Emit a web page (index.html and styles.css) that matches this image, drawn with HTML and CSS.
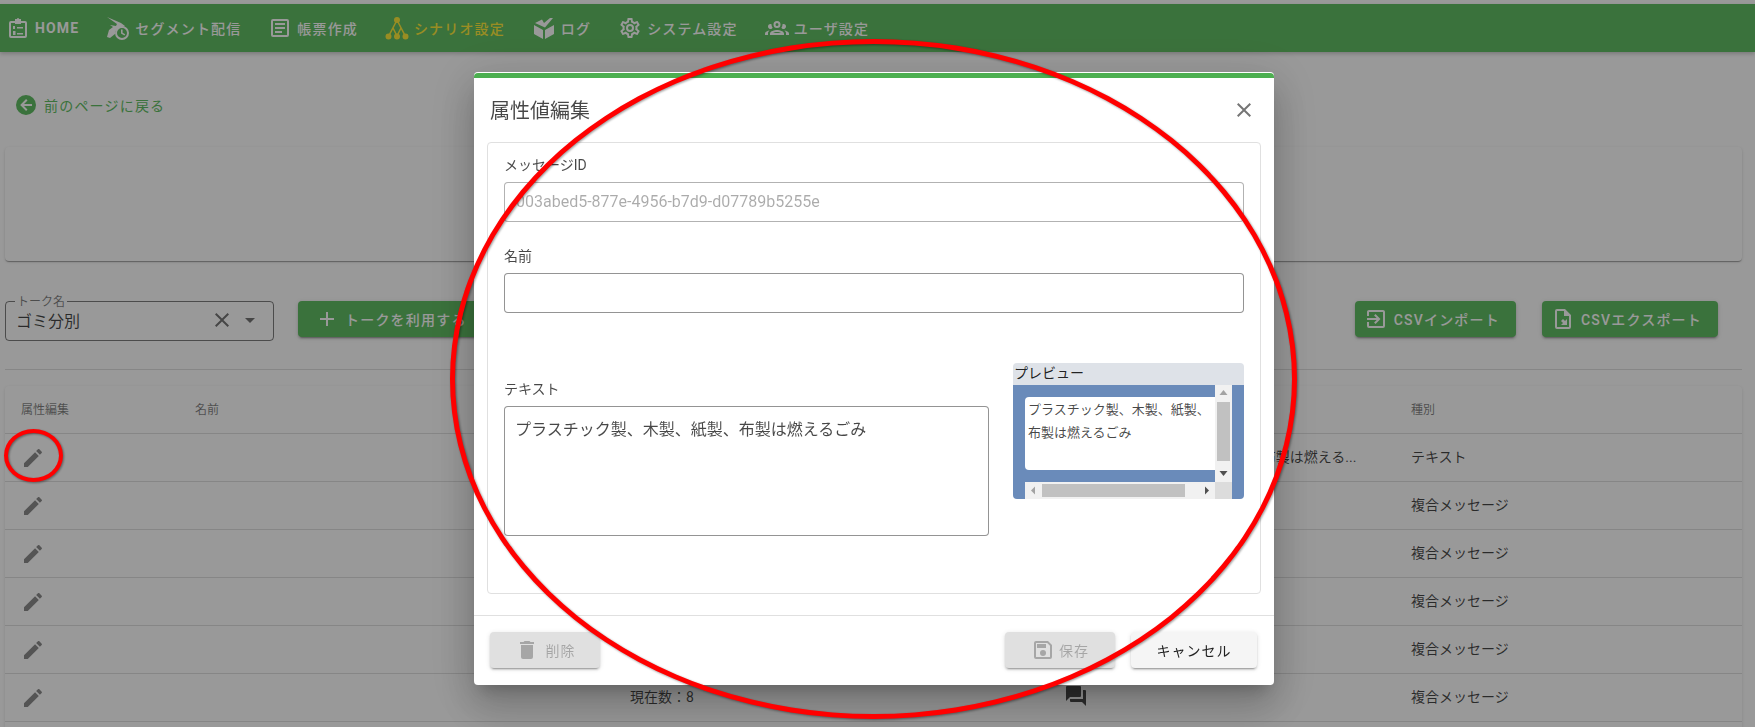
FILE: index.html
```html
<!DOCTYPE html>
<html lang="ja">
<head>
  <meta charset="UTF-8" />
  <title>属性値編集</title>
  <link rel="stylesheet" href="styles.css">
</head>
<body>
  <svg class="icon-defs" aria-hidden="true">
    <symbol id="i-edit" viewBox="0 0 24 24"><path d="M3 17.25V21h3.75L17.81 9.94l-3.75-3.75L3 17.25zM20.71 7.04c.39-.39.39-1.02 0-1.41l-2.34-2.34c-.39-.39-1.02-.39-1.41 0l-1.83 1.83 3.75 3.75 1.83-1.83z"/></symbol>
    <symbol id="i-close" viewBox="0 0 24 24"><path d="M19 6.41L17.59 5 12 10.59 6.41 5 5 6.41 10.59 12 5 17.59 6.41 19 12 13.41 17.59 19 19 17.59 13.41 12z"/></symbol>
  </svg>

  <nav class="topnav">
    <a class="nav-item">
      <svg class="nav-icon" viewBox="0 0 24 24"><path d="M9 3h2a1 1 0 0 1 2 0h2v2h4a2 2 0 0 1 2 2v13a2 2 0 0 1-2 2H5a2 2 0 0 1-2-2V7a2 2 0 0 1 2-2h4V3zM5 7v13h14V7h-4v1H9V7H5zm2 3h2v3H7v-3zm4 1h6v1.5h-6V11zm-4 4h2.5v4H7v-4zm4 2h6v1.5h-6V17z"/></svg>
      <span class="nav-label nav-strong">HOME</span>
    </a>
    <a class="nav-item">
      <svg class="nav-icon" viewBox="0 0 24 24"><path d="M1 1l14 6 4 3-2 1a7 7 0 0 0-8 7l-5 4-3-1 2-7 4-3-3-2 6 1 1-2L1 1z"/><path fill-rule="evenodd" d="M16 10a7 7 0 1 1 0 14 7 7 0 0 1 0-14zm0 2a5 5 0 1 0 0 10 5 5 0 0 0 0-10zm-1 1.5h1.6v3.2l2.6 1.5-.8 1.3-3.4-2v-4z"/></svg>
      <span class="nav-label">セグメント配信</span>
    </a>
    <a class="nav-item">
      <svg class="nav-icon" viewBox="0 0 24 24"><path d="M5 3h14a2 2 0 0 1 2 2v14a2 2 0 0 1-2 2H5a2 2 0 0 1-2-2V5a2 2 0 0 1 2-2m0 2v14h14V5H5m2 2h10v2H7V7m0 4h10v2H7v-2m0 4h7v2H7v-2z"/></svg>
      <span class="nav-label">帳票作成</span>
    </a>
    <a class="nav-item nav-active">
      <svg class="nav-icon" viewBox="0 0 24 24" fill="none" stroke="currentColor" stroke-width="1.6"><circle cx="12" cy="4" r="2.2"/><circle cx="3.5" cy="20.5" r="2.2"/><circle cx="12" cy="20.5" r="2.2"/><circle cx="20.5" cy="20.5" r="2.2"/><path d="M11 6L4.5 18.5M13 6l6.500 12.500M8 12l3.300 6.500M16 12l-3.300 6.500"/></svg>
      <span class="nav-label">シナリオ設定</span>
    </a>
    <a class="nav-item">
      <svg class="nav-icon" viewBox="0 0 24 24"><path d="M2 9l9 5v9l-9-5V9zm20 0v9l-9 5v-9l9-5zM3 7l7-3.500 2 3.500 6-5 3 0-8 9.500L3 7z"/></svg>
      <span class="nav-label">ログ</span>
    </a>
    <a class="nav-item">
      <svg class="nav-icon" viewBox="0 0 24 24"><path d="M12,8A4,4 0 0,1 16,12A4,4 0 0,1 12,16A4,4 0 0,1 8,12A4,4 0 0,1 12,8M12,10A2,2 0 0,0 10,12A2,2 0 0,0 12,14A2,2 0 0,0 14,12A2,2 0 0,0 12,10M10,22C9.75,22 9.54,21.82 9.5,21.58L9.13,18.93C8.5,18.68 7.96,18.34 7.44,17.94L4.95,18.95C4.73,19.03 4.46,18.95 4.34,18.73L2.34,15.27C2.21,15.05 2.27,14.78 2.46,14.63L4.57,12.97L4.5,12L4.57,11L2.46,9.37C2.27,9.22 2.21,8.95 2.34,8.73L4.34,5.27C4.46,5.05 4.73,4.96 4.95,5.05L7.44,6.05C7.96,5.66 8.5,5.32 9.13,5.07L9.5,2.42C9.54,2.18 9.75,2 10,2H14C14.25,2 14.46,2.18 14.5,2.42L14.87,5.07C15.5,5.32 16.04,5.66 16.56,6.05L19.05,5.05C19.27,4.96 19.54,5.05 19.66,5.27L21.66,8.73C21.79,8.95 21.73,9.22 21.54,9.37L19.43,11L19.5,12L19.43,13L21.54,14.63C21.73,14.78 21.79,15.05 21.66,15.27L19.66,18.73C19.54,18.95 19.27,19.04 19.05,18.95L16.56,17.95C16.04,18.34 15.5,18.68 14.87,18.93L14.5,21.58C14.46,21.82 14.25,22 14,22H10M11.25,4L10.88,6.61C9.68,6.86 8.62,7.5 7.85,8.39L5.44,7.35L4.69,8.65L6.8,10.2C6.4,11.37 6.4,12.64 6.8,13.8L4.68,15.36L5.43,16.66L7.86,15.62C8.63,16.5 9.68,17.14 10.87,17.38L11.24,20H12.76L13.13,17.39C14.32,17.14 15.37,16.5 16.14,15.62L18.57,16.66L19.32,15.36L17.2,13.81C17.6,12.64 17.6,11.37 17.2,10.2L19.31,8.65L18.56,7.35L16.15,8.39C15.38,7.5 14.32,6.86 13.12,6.62L12.75,4H11.25Z"/></svg>
      <span class="nav-label">システム設定</span>
    </a>
    <a class="nav-item">
      <svg class="nav-icon" viewBox="0 0 24 24"><path d="M12,5A3.5,3.5 0 0,0 8.5,8.5A3.5,3.5 0 0,0 12,12A3.5,3.5 0 0,0 15.5,8.5A3.5,3.5 0 0,0 12,5M12,7A1.5,1.5 0 0,1 13.5,8.5A1.5,1.5 0 0,1 12,10A1.5,1.5 0 0,1 10.5,8.5A1.5,1.5 0 0,1 12,7M5.5,8A2.5,2.5 0 0,0 3,10.5C3,11.44 3.53,12.25 4.29,12.68C4.65,12.88 5.06,13 5.5,13C5.94,13 6.35,12.88 6.71,12.68C7.08,12.47 7.39,12.17 7.62,11.81C6.89,10.86 6.5,9.7 6.5,8.5C6.5,8.41 6.5,8.31 6.5,8.22C6.2,8.08 5.86,8 5.5,8M18.5,8C18.14,8 17.8,8.08 17.5,8.22C17.5,8.31 17.5,8.41 17.5,8.5C17.5,9.7 17.11,10.86 16.38,11.81C16.5,12 16.63,12.15 16.78,12.3C16.94,12.45 17.1,12.58 17.29,12.68C17.65,12.88 18.06,13 18.5,13C18.94,13 19.35,12.88 19.71,12.68C20.47,12.25 21,11.44 21,10.5A2.5,2.5 0 0,0 18.5,8M12,14C9.66,14 5,15.17 5,17.5V19H19V17.5C19,15.17 14.34,14 12,14M4.71,14.55C2.78,14.78 0,15.76 0,17.5V19H3V17.07C3,16.06 3.69,15.22 4.71,14.55M19.29,14.55C20.31,15.22 21,16.06 21,17.07V19H24V17.5C24,15.76 21.22,14.78 19.29,14.55M12,16C13.53,16 15.24,16.5 16.23,17H7.77C8.76,16.5 10.47,16 12,16Z"/></svg>
      <span class="nav-label">ユーザ設定</span>
    </a>
  </nav>

  <main class="content">
    <a class="back-link">
      <svg class="back-icon" viewBox="0 0 24 24"><path d="M2,12A10,10 0 0,1 12,2A10,10 0 0,1 22,12A10,10 0 0,1 12,22A10,10 0 0,1 2,12M18,11H10L13.5,7.5L12.08,6.08L6.16,12L12.08,17.92L13.5,16.5L10,13H18V11Z"/></svg>
      前のページに戻る
    </a>

    <div class="summary-card"></div>

    <div class="toolbar">
      <div class="talk-select">
        <span class="talk-label">トーク名</span>
        <span class="talk-value">ゴミ分別</span>
        <svg class="talk-icon"><use href="#i-close"/></svg>
        <svg class="talk-icon talk-arrow" viewBox="0 0 24 24"><path d="M7 10l5 5 5-5z"/></svg>
      </div>
      <button class="btn-green btn-talk">
        <svg class="btn-icon" viewBox="0 0 24 24"><path d="M19 13h-6v6h-2v-6H5v-2h6V5h2v6h6v2z"/></svg>
        トークを利用する
      </button>
      <div class="toolbar-right">
        <button class="btn-green btn-csv">
          <svg class="btn-icon" viewBox="0 0 24 24"><path d="M19,3H5C3.89,3 3,3.89 3,5V9H5V5H19V19H5V15H3V19A2,2 0 0,0 5,21H19A2,2 0 0,0 21,19V5C21,3.89 20.1,3 19,3M10.08,15.58L11.5,17L16.5,12L11.5,7L10.08,8.41L12.67,11H3V13H12.67L10.08,15.58Z"/></svg>
          CSVインポート
        </button>
        <button class="btn-green btn-csv">
          <svg class="btn-icon" viewBox="0 0 24 24"><path d="M14,2H6A2,2 0 0,0 4,4V20A2,2 0 0,0 6,22H18A2,2 0 0,0 20,20V8L14,2M18,20H6V4H13V9H18V20Z"/><path d="M16 12v6h-6l2-2-2-2 2-2 2 2z"/></svg>
          CSVエクスポート
        </button>
      </div>
    </div>

    <hr class="divider">

    <div class="table-card">
      <table class="msg-table">
        <colgroup>
          <col class="col-edit"><col class="col-name"><col class="col-count"><col class="col-body"><col class="col-type">
        </colgroup>
        <thead>
          <tr><th>属性編集</th><th>名前</th><th></th><th></th><th>種別</th></tr>
        </thead>
        <tbody>
          <tr>
            <td class="cell-edit"><svg class="edit-icon"><use href="#i-edit"/></svg></td>
            <td></td><td></td><td>プラスチック製、木製、紙製、布製は燃える...</td><td>テキスト</td>
          </tr>
          <tr>
            <td class="cell-edit"><svg class="edit-icon"><use href="#i-edit"/></svg></td>
            <td></td><td></td><td></td><td>複合メッセージ</td>
          </tr>
          <tr>
            <td class="cell-edit"><svg class="edit-icon"><use href="#i-edit"/></svg></td>
            <td></td><td></td><td></td><td>複合メッセージ</td>
          </tr>
          <tr>
            <td class="cell-edit"><svg class="edit-icon"><use href="#i-edit"/></svg></td>
            <td></td><td></td><td></td><td>複合メッセージ</td>
          </tr>
          <tr>
            <td class="cell-edit"><svg class="edit-icon"><use href="#i-edit"/></svg></td>
            <td></td><td></td><td></td><td>複合メッセージ</td>
          </tr>
          <tr>
            <td class="cell-edit"><svg class="edit-icon"><use href="#i-edit"/></svg></td>
            <td></td>
            <td>現在数：8</td>
            <td><svg class="forum-icon" viewBox="0 0 24 24"><path d="M21,6H19V15H6V17A1,1 0 0,0 7,18H18L22,22V7A1,1 0 0,0 21,6M17,12V3A1,1 0 0,0 16,2H3A1,1 0 0,0 2,3V17L6,13H16A1,1 0 0,0 17,12Z"/></svg></td>
            <td>複合メッセージ</td>
          </tr>
          <tr>
            <td></td><td></td><td></td><td></td><td></td>
          </tr>
        </tbody>
      </table>
    </div>
  </main>

  <div class="overlay">
    <div class="dialog">
      <div class="dialog-bar"></div>
      <div class="dialog-title">
        <span>属性値編集</span>
        <svg class="close-icon"><use href="#i-close"/></svg>
      </div>

      <div class="form-box">
        <label class="field-label">メッセージID</label>
        <input class="field-input" type="text" value="003abed5-877e-4956-b7d9-d07789b5255e" disabled>

        <label class="field-label label-name">名前</label>
        <input class="field-input input-name" type="text">

        <div class="text-row">
          <div class="text-col">
            <label class="field-label">テキスト</label>
            <textarea class="field-text">プラスチック製、木製、紙製、布製は燃えるごみ</textarea>
          </div>
          <div class="preview">
            <div class="preview-head">プレビュー</div>
            <div class="preview-body">
              <div class="preview-view">
                <div class="bubble">プラスチック製、木製、紙製、布製は燃えるごみ</div>
              </div>
              <div class="scroll-v">
                <span class="arrow arrow-up"></span>
                <span class="thumb-v"></span>
                <span class="arrow arrow-down"></span>
              </div>
              <div class="scroll-h">
                <span class="arrow arrow-left"></span>
                <span class="thumb-h"></span>
                <span class="arrow arrow-right"></span>
              </div>
              <div class="scroll-corner"></div>
            </div>
          </div>
        </div>
      </div>

      <div class="dialog-foot">
        <button class="btn-flat btn-disabled btn-delete">
          <svg class="btn-icon" viewBox="0 0 24 24"><path d="M19,4H15.5L14.5,3H9.5L8.5,4H5V6H19M6,19A2,2 0 0,0 8,21H16A2,2 0 0,0 18,19V7H6V19Z"/></svg>
          削除
        </button>
        <button class="btn-flat btn-disabled btn-save">
          <svg class="btn-icon" viewBox="0 0 24 24"><path d="M17 3H5a2 2 0 0 0-2 2v14a2 2 0 0 0 2 2h14a2 2 0 0 0 2-2V7l-4-4m2 16H5V5h11.170L19 7.830V19m-7-7a3 3 0 1 0 0 6 3 3 0 0 0 0-6M6 6h9v4H6V6z"/></svg>
          保存
        </button>
        <button class="btn-flat btn-cancel">キャンセル</button>
      </div>
    </div>
  </div>

  <!-- red marks drawn over the screen -->
  <div class="mark mark-big"></div>
  <div class="mark mark-small"></div>
</body>
</html>
```

FILE: styles.css
```css
* {
  box-sizing: border-box;
}

html, body {
  height: 100%;
}

body {
  margin: 0;
  padding-top: 4px;
  overflow: hidden;
  background: #fff;
  color: rgba(0, 0, 0, 0.72);
  font-family: Roboto, "Noto Sans CJK JP", sans-serif;
  font-size: 14px;
}

.icon-defs {
  display: none;
}

/* top nav */
.topnav {
  display: flex;
  align-items: center;
  gap: 27px;
  height: 48px;
  padding-left: 6px;
  background: #62be64;
  color: #fff;
  box-shadow: 0 2px 4px rgba(0, 0, 0, 0.2);
}

.nav-item {
  display: flex;
  align-items: center;
  gap: 5px;
}

.nav-icon {
  width: 24px;
  height: 24px;
  fill: currentColor;
}

.nav-label {
  letter-spacing: 1.15px;
  font-weight: 500;
}

.nav-strong {
  font-weight: 700;
}

.nav-active {
  color: #ffeb3b;
}

/* page */
.content {
  padding: 41px 13px 0 5px;
}

.back-link {
  display: flex;
  align-items: center;
  gap: 6px;
  height: 24px;
  padding-left: 9px;
  color: #62be64;
  letter-spacing: 1.2px;
}

.back-icon {
  width: 24px;
  height: 24px;
  fill: currentColor;
}

.summary-card {
  height: 114px;
  margin-top: 30px;
  border-radius: 4px;
  background: #fff;
  box-shadow: 0 2px 1px -1px rgba(0, 0, 0, 0.2), 0 1px 1px rgba(0, 0, 0, 0.14), 0 1px 3px rgba(0, 0, 0, 0.12);
}

.toolbar {
  display: flex;
  align-items: flex-start;
  gap: 24px;
  margin-top: 40px;
}

.talk-select {
  position: relative;
  display: flex;
  align-items: center;
  width: 269px;
  height: 40px;
  padding: 0 11px 2px 10px;
  border: 1px solid rgba(0, 0, 0, 0.5);
  border-radius: 4px;
}

.talk-label {
  position: absolute;
  top: -8px;
  left: 9px;
  padding: 0 2px;
  background: #fff;
  color: rgba(0, 0, 0, 0.5);
  font-size: 12px;
  line-height: 16px;
}

.talk-value {
  flex: 1;
  font-size: 16px;
}

.talk-icon {
  width: 24px;
  height: 24px;
  fill: rgba(0, 0, 0, 0.54);
}

.talk-arrow {
  margin-left: 4px;
}

.btn-green {
  display: flex;
  align-items: center;
  height: 36px;
  border: 0;
  border-radius: 4px;
  background: #62be64;
  color: #fff;
  font-family: inherit;
  font-size: 14px;
  font-weight: 500;
  letter-spacing: 1.2px;
  box-shadow: 0 3px 1px -2px rgba(0, 0, 0, 0.2), 0 2px 2px rgba(0, 0, 0, 0.14), 0 1px 5px rgba(0, 0, 0, 0.12);
}

.btn-icon {
  width: 24px;
  height: 24px;
  fill: currentColor;
}

.btn-talk {
  gap: 6px;
  width: 183px;
  padding: 0 0 0 17px;
}

.toolbar-right {
  display: flex;
  gap: 26px;
  margin-left: auto;
  padding-right: 24px;
}

.btn-csv {
  gap: 6px;
  padding: 0 16px 0 9px;
}

.divider {
  margin: 28px 0 16px;
  border: 0;
  border-top: 1px solid rgba(0, 0, 0, 0.12);
}

.table-card {
  border-radius: 4px;
  background: #fff;
  box-shadow: 0 1px 3px rgba(0, 0, 0, 0.12);
}

.msg-table {
  width: 100%;
  table-layout: fixed;
  border-collapse: separate;
  border-spacing: 0;
}

.col-edit { width: 174px; }
.col-name { width: 435px; }
.col-count { width: 436px; }
.col-body { width: 345px; }

.msg-table th,
.msg-table td {
  height: 48px;
  padding: 0 16px 3px;
  border-bottom: 1px solid rgba(0, 0, 0, 0.12);
  text-align: left;
  white-space: nowrap;
}

.msg-table th {
  color: rgba(0, 0, 0, 0.5);
  font-size: 12px;
  font-weight: 400;
}

.msg-table .cell-edit {
  padding-bottom: 0;
}

.edit-icon {
  display: block;
  width: 24px;
  height: 24px;
  fill: rgba(0, 0, 0, 0.45);
}

.forum-icon {
  display: block;
  width: 24px;
  height: 24px;
  margin-left: -2px;
  fill: rgba(0, 0, 0, 0.7);
}

/* dialog */
.overlay {
  position: fixed;
  top: 0;
  right: 0;
  bottom: 0;
  left: 0;
  padding: 72px 0 0 474px;
  background: rgba(0, 0, 0, 0.4);
}

.dialog {
  width: 800px;
  height: 613px;
  padding-top: 1px;
  border-radius: 4px;
  background: #fff;
  box-shadow: 0 11px 15px -7px rgba(0, 0, 0, 0.2), 0 24px 38px 3px rgba(0, 0, 0, 0.14), 0 9px 46px 8px rgba(0, 0, 0, 0.12);
}

.dialog-bar {
  height: 5px;
  border-radius: 4px 4px 0 0;
  background: #4caf50;
}

.dialog-title {
  display: flex;
  align-items: center;
  justify-content: space-between;
  height: 64px;
  padding: 0 18px 2px 16px;
  font-size: 20px;
}

.close-icon {
  width: 24px;
  height: 24px;
  margin-top: 2px;
  fill: rgba(0, 0, 0, 0.54);
}

.form-box {
  height: 452px;
  margin: 0 13px;
  padding: 12px 16px 0;
  border: 1px solid #e0e0e0;
  border-radius: 4px;
}

.field-label {
  display: block;
  line-height: 20px;
}

.field-input {
  display: block;
  width: 100%;
  height: 40px;
  margin-top: 7px;
  padding: 0 11px 2px;
  border: 1px solid rgba(0, 0, 0, 0.42);
  border-radius: 4px;
  background: #fff;
  color: rgba(0, 0, 0, 0.33);
  font-family: inherit;
  font-size: 16px;
}

.field-input:disabled {
  border-color: rgba(0, 0, 0, 0.3);
}

.label-name {
  margin-top: 24px;
}

.text-row {
  display: flex;
  gap: 24px;
  margin-top: 50px;
}

.text-col {
  width: 485px;
  padding-top: 16px;
}

.field-text {
  display: block;
  width: 100%;
  height: 130px;
  margin-top: 7px;
  padding: 11px 10px;
  border: 1px solid rgba(0, 0, 0, 0.42);
  border-radius: 4px;
  color: rgba(0, 0, 0, 0.72);
  font-family: inherit;
  font-size: 16px;
  line-height: 24px;
  resize: none;
}

.preview {
  width: 231px;
  height: 136px;
  overflow: hidden;
  border-radius: 4px;
}

.preview-head {
  height: 22px;
  padding-left: 1px;
  background: #dee2e8;
  color: rgba(0, 0, 0, 0.87);
  line-height: 21px;
}

.preview-body {
  display: grid;
  grid-template-columns: 190px 17px;
  grid-template-rows: 97px 17px;
  padding-left: 12px;
  background: #6a8bba;
}

.preview-view {
  padding-top: 12px;
}

.bubble {
  height: 73px;
  padding: 1px 3px 0;
  border-radius: 4px 0 0 4px;
  background: #fff;
  font-size: 13px;
  line-height: 23px;
}

.scroll-v,
.scroll-h {
  display: flex;
  align-items: center;
  justify-content: space-between;
  background: #f1f1f1;
}

.scroll-v {
  flex-direction: column;
}

.thumb-v {
  width: 13px;
  height: 59px;
  margin-bottom: 4px;
  background: #c1c1c1;
}

.thumb-h {
  width: 143px;
  height: 13px;
  margin-right: 13px;
  background: #c1c1c1;
}

.scroll-corner {
  background: #dcdcdc;
}

.arrow {
  display: block;
  width: 17px;
  height: 17px;
  flex: none;
  background: #505050;
}

.arrow-up {
  background: #a3a3a3;
  clip-path: polygon(8.5px 5px, 12.500px 10px, 4.500px 10px);
}

.arrow-down {
  clip-path: polygon(4.500px 6px, 12.500px 6px, 8.5px 11px);
}

.arrow-left {
  background: #a3a3a3;
  clip-path: polygon(6px 8.5px, 10px 4.500px, 10px 12.500px);
}

.arrow-right {
  clip-path: polygon(7px 4.500px, 11px 8.5px, 7px 12.500px);
}

.dialog-foot {
  display: flex;
  gap: 16px;
  margin-top: 21px;
  padding: 16px 17px 0 16px;
  border-top: 1px solid #e0e0e0;
}

.btn-flat {
  display: flex;
  align-items: center;
  justify-content: center;
  height: 36px;
  gap: 4px;
  border: 0;
  border-radius: 4px;
  font-family: inherit;
  font-size: 14px;
  letter-spacing: 1px;
  box-shadow: 0 3px 1px -2px rgba(0, 0, 0, 0.2), 0 2px 2px rgba(0, 0, 0, 0.14), 0 1px 5px rgba(0, 0, 0, 0.12);
}

.btn-disabled {
  width: 110px;
  background: #e0e0e0;
  color: rgba(0, 0, 0, 0.26);
}

.btn-delete {
  gap: 7px;
}

.btn-save {
  margin-left: auto;
}

.btn-cancel {
  width: 126px;
  background: #f5f5f5;
  color: rgba(0, 0, 0, 0.87);
}

/* red annotation marks */
.mark {
  position: fixed;
  border: 5px solid #f00;
  border-radius: 50%;
  filter: drop-shadow(1px 1px 1px rgba(0, 0, 0, 0.4));
}

.mark-big {
  top: 39px;
  left: 450px;
  width: 847px;
  height: 680px;
}

.mark-small {
  top: 429px;
  left: 4px;
  width: 59px;
  height: 53px;
  border-width: 4px;
}
```
